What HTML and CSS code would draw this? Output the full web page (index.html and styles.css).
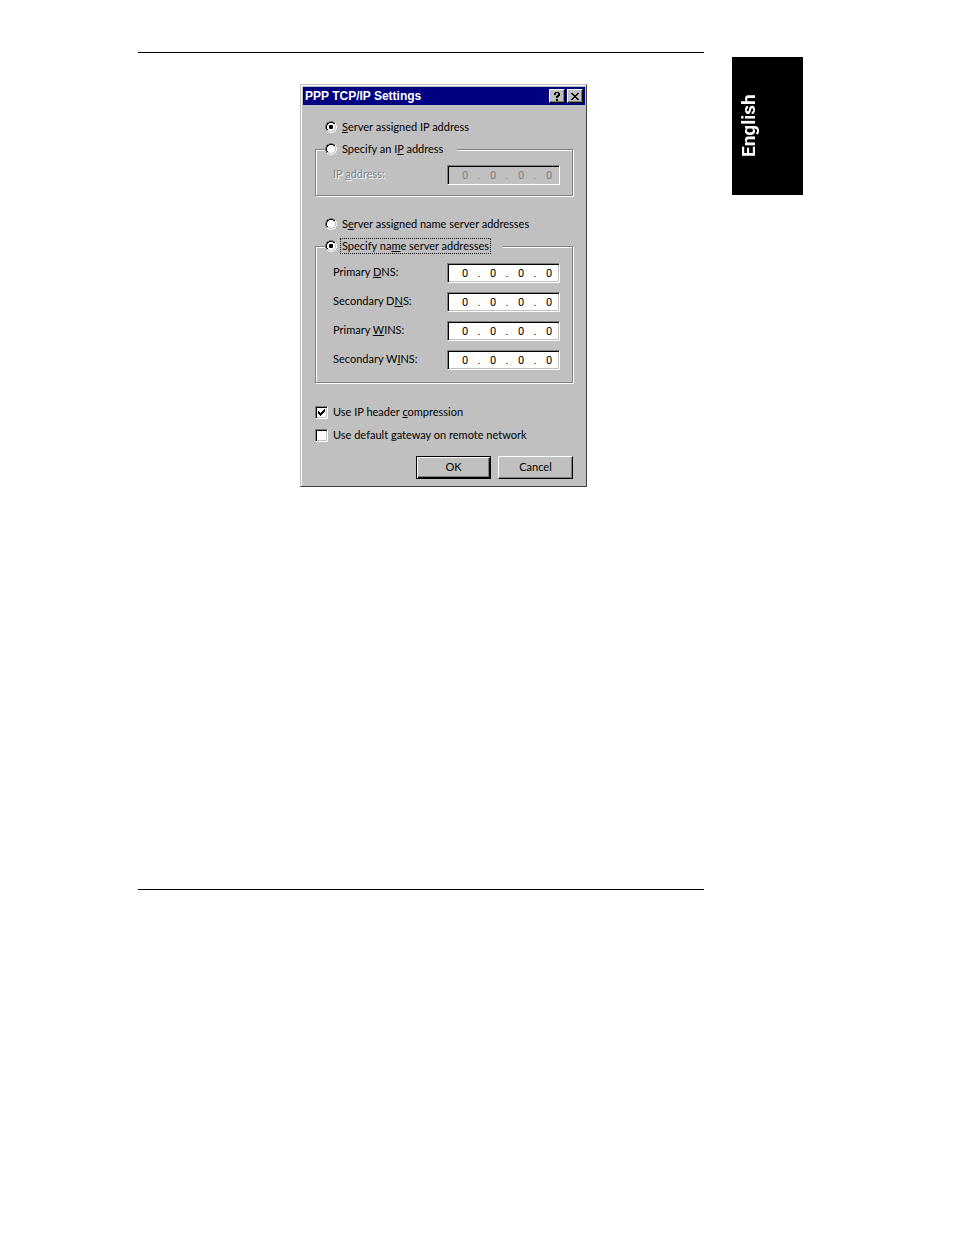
FILE: index.html
```html
<!DOCTYPE html>
<html lang="en">
<head>
  <meta charset="UTF-8">
  <meta name="viewport" content="width=device-width, initial-scale=1">
  <title>PPP TCP/IP Settings</title>
  <link rel="stylesheet" href="styles.css">
</head>
<body>
  <main class="sheet">
    <form class="dialog">
      <header class="titlebar">
        <h1>PPP TCP/IP Settings</h1>
        <button type="button" class="title-btn" aria-label="Help">
          <svg width="8" height="9" viewBox="0 0 8 9" shape-rendering="crispEdges"><path d="M2 0h4v1h1v3h-1v1h-1v1h-2v-2h1v-1h1v-2h-2v2h-2v-2h1zM3 7h2v2h-2z"/></svg>
        </button>
        <button type="button" class="title-btn" aria-label="Close">
          <svg width="8" height="7" viewBox="0 0 8 7" shape-rendering="crispEdges"><path d="M0 0h2v1h1v1h2v-1h1v-1h2v1h-1v1h-1v1h-1v1h1v1h1v1h1v1h-2v-1h-1v-1h-2v1h-1v1h-2v-1h1v-1h1v-1h1v-1h-1v-1h-1v-1h-1z"/></svg>
        </button>
      </header>

      <div class="content">
        <div class="option">
          <input type="radio" name="ip" id="ipServer" checked>
          <label for="ipServer"><u>S</u>erver assigned IP address</label>
        </div>
        <fieldset class="group">
          <legend class="option">
            <input type="radio" name="ip" id="ipManual">
            <label for="ipManual">Specify an I<u>P</u> address</label>
          </legend>
          <div class="row disabled">
            <label for="ip1">IP <u>a</u>ddress:</label>
            <div class="ip">
              <input type="text" id="ip1" value="0" disabled><span>.</span><input type="text" aria-label="IP 2" value="0" disabled><span>.</span><input type="text" aria-label="IP 3" value="0" disabled><span>.</span><input type="text" aria-label="IP 4" value="0" disabled>
            </div>
          </div>
        </fieldset>

        <div class="option names">
          <input type="radio" name="ns" id="nsServer">
          <label for="nsServer">S<u>e</u>rver assigned name server addresses</label>
        </div>
        <fieldset class="group servers">
          <legend class="option">
            <input type="radio" name="ns" id="nsManual" checked>
            <label for="nsManual" class="focused">Specify na<u>m</u>e server addresses</label>
          </legend>
          <div class="row">
            <label for="dnsA">Primary <u>D</u>NS:</label>
            <div class="ip">
              <input type="text" id="dnsA" value="0"><span>.</span><input type="text" aria-label="Primary DNS 2" value="0"><span>.</span><input type="text" aria-label="Primary DNS 3" value="0"><span>.</span><input type="text" aria-label="Primary DNS 4" value="0">
            </div>
          </div>
          <div class="row">
            <label for="dnsB">Secondary D<u>N</u>S:</label>
            <div class="ip">
              <input type="text" id="dnsB" value="0"><span>.</span><input type="text" aria-label="Secondary DNS 2" value="0"><span>.</span><input type="text" aria-label="Secondary DNS 3" value="0"><span>.</span><input type="text" aria-label="Secondary DNS 4" value="0">
            </div>
          </div>
          <div class="row">
            <label for="winsA">Primary <u>W</u>INS:</label>
            <div class="ip">
              <input type="text" id="winsA" value="0"><span>.</span><input type="text" aria-label="Primary WINS 2" value="0"><span>.</span><input type="text" aria-label="Primary WINS 3" value="0"><span>.</span><input type="text" aria-label="Primary WINS 4" value="0">
            </div>
          </div>
          <div class="row">
            <label for="winsB">Secondary W<u>I</u>NS:</label>
            <div class="ip">
              <input type="text" id="winsB" value="0"><span>.</span><input type="text" aria-label="Secondary WINS 2" value="0"><span>.</span><input type="text" aria-label="Secondary WINS 3" value="0"><span>.</span><input type="text" aria-label="Secondary WINS 4" value="0">
            </div>
          </div>
        </fieldset>

        <div class="checks">
          <div class="check">
            <input type="checkbox" id="compress" checked>
            <label for="compress">Use IP header <u>c</u>ompression</label>
          </div>
          <div class="check">
            <input type="checkbox" id="gateway">
            <label for="gateway">Use default <u>g</u>ateway on remote network</label>
          </div>
        </div>

        <div class="buttons">
          <button type="submit" class="btn default">OK</button>
          <button type="button" class="btn">Cancel</button>
        </div>
      </div>
    </form>
  </main>
  <aside class="lang-tab">English</aside>
</body>
</html>
```
FILE: styles.css
```css
:root {
  --face: #c0c0c0;
  --shadow: #808080;
  --dark: #404040;
  --title: #000080;
}

* {
  box-sizing: border-box;
}

body {
  margin: 0;
  padding: 52px 151px 0 138px;
  display: flex;
  align-items: flex-start;
  gap: 28px;
  background: #fff;
  color: #000;
  font: 11px/14px Lato, "Liberation Sans", sans-serif;
}

.sheet {
  flex: 1;
  min-height: 838px;
  padding: 31px 0 0 162px;
  border-top: 1px solid #000;
  border-bottom: 1px solid #000;
}

.lang-tab {
  width: 71px;
  height: 138px;
  margin-top: 5px;
  padding-left: 37px;
  display: flex;
  align-items: center;
  justify-content: center;
  background: #000;
  color: #fff;
  font: bold 19px/34px Roboto, "Liberation Sans", sans-serif;
  writing-mode: vertical-rl;
  transform: rotate(180deg);
}

/* dialog window */
.dialog {
  width: 287px;
  padding: 2px 1px 7px 2px;
  background: var(--face);
  border: 1px solid var(--dark);
  border-top-color: var(--face);
  border-left-color: var(--face);
  box-shadow: inset 1px 1px #fff;
}

.titlebar {
  display: flex;
  align-items: center;
  gap: 2px;
  height: 18px;
  padding: 0 2px;
  background: var(--title);
  color: #fff;
}

.titlebar h1 {
  flex: 1;
  margin: 0;
  font-family: "Liberation Sans", Arial, sans-serif;
  font-size: 12px;
}

.title-btn {
  display: flex;
  align-items: center;
  justify-content: center;
  width: 16px;
  height: 14px;
  padding: 0;
  background: var(--face);
  border: 1px solid #000;
  border-top-color: #fff;
  border-left-color: #fff;
  box-shadow: inset -1px -1px var(--shadow);
}

.content {
  padding: 15px 12px 0;
}

.option {
  display: flex;
  align-items: center;
  gap: 4px;
  height: 14px;
  padding: 0 13px 0 10px;
}

.option label {
  padding: 0 1px;
}

.option .focused {
  outline: 1px dotted #000;
}

/* etched frame */
.group {
  min-width: 0;
  margin: 8px 0 0;
  padding: 9px 12px 10px 16px;
  border: 1px solid var(--shadow);
  box-shadow: 1px 1px #fff, inset 1px 1px #fff;
}

.group legend {
  margin-left: -7px;
  padding-left: 0;
  background: var(--face);
}

.names {
  margin-top: 21px;
}

.servers {
  padding-top: 10px;
  padding-bottom: 12px;
}

.row {
  display: flex;
  align-items: center;
  justify-content: space-between;
  margin-bottom: 9px;
}

.row:last-child {
  margin-bottom: 0;
}

.row label {
  padding: 0 0 2px 1px;
}

.disabled {
  color: var(--shadow);
}

.disabled label {
  text-shadow: 1px 1px #fff;
}

.ip {
  display: flex;
  width: 113px;
  height: 20px;
  padding: 2px 1px 0 8px;
  background: #fff;
  border: 1px solid #fff;
  border-top-color: var(--shadow);
  border-left-color: var(--shadow);
  box-shadow: inset 1px 1px #000, inset -1px -1px var(--face);
  font-family: Roboto, "Liberation Sans", sans-serif;
  line-height: 16px;
}

.ip input {
  width: 18px;
  padding: 0;
  border: 0;
  background: none;
  color: inherit;
  font: inherit;
  text-align: center;
}

.ip span {
  width: 10px;
  text-align: center;
}

.disabled .ip {
  background: var(--face);
}

input[type="radio"],
input[type="checkbox"] {
  appearance: none;
  flex: none;
  margin: 0;
}

input[type="radio"] {
  width: 12px;
  height: 12px;
  background: url("data:image/svg+xml,%3Csvg xmlns='http://www.w3.org/2000/svg' viewBox='0 0 12 12'%3E%3Ccircle cx='6' cy='6' r='5' fill='%23fff'/%3E%3Cg fill='none' shape-rendering='crispEdges'%3E%3Cpath stroke='%23808080' d='M4 .5h4M2 1.5h2M8 1.5h2M1.5 2v2M.5 4v4M1.5 8v2'/%3E%3Cpath stroke='%23000' d='M4 1.5h4M2 2.5h2M8 2.5h2M2.5 3v1M1.5 4v4M2.5 8v1'/%3E%3Cpath stroke='%23fff' d='M10.5 2v2M11.5 4v4M10.5 8v2M8 10.5h2M4 11.5h4M2 10.5h2'/%3E%3Cpath stroke='%23c0c0c0' d='M9.5 3v1M10.5 4v4M9.5 8v1M8 9.5h2M4 10.5h4M2 9.5h2'/%3E%3C/g%3E%3C/svg%3E");
}

input[type="radio"]:checked::before {
  content: "";
  display: block;
  width: 4px;
  height: 4px;
  margin: 4px;
  border-radius: 1px;
  background: #000;
}

/* check boxes */
.checks {
  margin-top: 22px;
}

.check {
  display: flex;
  align-items: center;
  gap: 5px;
  margin-bottom: 9px;
}

input[type="checkbox"] {
  width: 13px;
  height: 13px;
  background: #fff;
  border: 1px solid #fff;
  border-top-color: var(--shadow);
  border-left-color: var(--shadow);
  box-shadow: inset 1px 1px #000, inset -1px -1px var(--face);
}

input[type="checkbox"]:checked {
  background: #fff url("data:image/svg+xml,%3Csvg xmlns='http://www.w3.org/2000/svg' width='7' height='7' shape-rendering='crispEdges'%3E%3Cpath d='M0 2h1v1h1v1h1v-1h1v-1h1v-1h1v-1h1v3h-1v1h-1v1h-1v1h-1v1h-1v-1h-1v-1h-1z'/%3E%3C/svg%3E") center no-repeat;
}

.buttons {
  display: flex;
  justify-content: flex-end;
  gap: 7px;
  margin-top: 14px;
}

.btn {
  width: 75px;
  height: 23px;
  padding: 0 0 1px;
  background: var(--face);
  color: #000;
  border: 1px solid #000;
  border-top-color: #fff;
  border-left-color: #fff;
  box-shadow: inset -1px -1px var(--shadow);
  font: inherit;
}

.btn.default {
  border-color: #000;
  box-shadow: inset 1px 1px #fff, inset -1px -1px #000, inset -2px -2px var(--shadow);
}
```
